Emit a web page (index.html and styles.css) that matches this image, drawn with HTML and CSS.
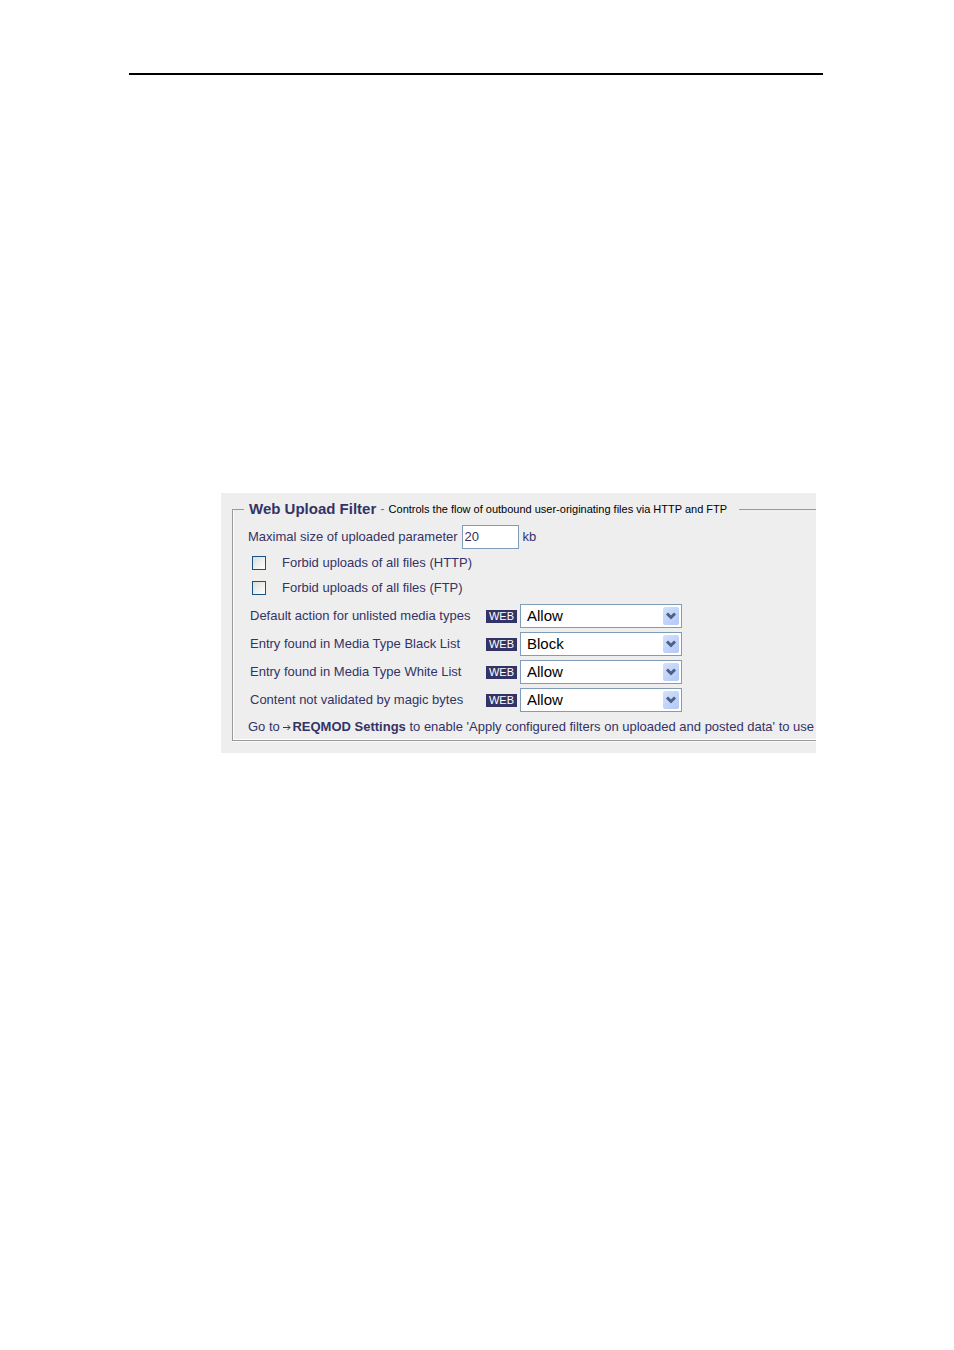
FILE: index.html
```html
<!DOCTYPE html>
<html lang="en">
<head>
<meta charset="utf-8">
<title>Web Upload Filter</title>
<link rel="stylesheet" href="styles.css">
</head>
<body>
<main class="page">
  <hr class="rule">
  <form class="panel">
    <fieldset class="group">
      <legend class="legend"><span class="title">Web Upload Filter</span><span class="dash">-</span><span class="hint">Controls the flow of outbound user-originating files via HTTP and FTP</span></legend>
      <div class="size-row">
        <label for="max-size">Maximal size of uploaded parameter</label>
        <input class="size" id="max-size" type="text" value="20">
        <span>kb</span>
      </div>
      <div class="check-row"><input class="check" type="checkbox" id="http"><label for="http">Forbid uploads of all files (HTTP)</label></div>
      <div class="check-row"><input class="check" type="checkbox" id="ftp"><label for="ftp">Forbid uploads of all files (FTP)</label></div>
      <div class="actions">
        <div class="action">
          <label for="unlisted">Default action for unlisted media types</label><span class="badge">WEB</span>
          <span class="picker"><select id="unlisted"><option selected>Allow</option><option>Block</option></select><svg class="arrow" viewBox="0 0 16 18" aria-hidden="true"><path d="M4 6.5l4 4 4-4"/></svg></span>
        </div>
        <div class="action">
          <label for="black">Entry found in Media Type Black List</label><span class="badge">WEB</span>
          <span class="picker"><select id="black"><option>Allow</option><option selected>Block</option></select><svg class="arrow" viewBox="0 0 16 18" aria-hidden="true"><path d="M4 6.5l4 4 4-4"/></svg></span>
        </div>
        <div class="action">
          <label for="white">Entry found in Media Type White List</label><span class="badge">WEB</span>
          <span class="picker"><select id="white"><option selected>Allow</option><option>Block</option></select><svg class="arrow" viewBox="0 0 16 18" aria-hidden="true"><path d="M4 6.5l4 4 4-4"/></svg></span>
        </div>
        <div class="action">
          <label for="magic">Content not validated by magic bytes</label><span class="badge">WEB</span>
          <span class="picker"><select id="magic"><option selected>Allow</option><option>Block</option></select><svg class="arrow" viewBox="0 0 16 18" aria-hidden="true"><path d="M4 6.5l4 4 4-4"/></svg></span>
        </div>
      </div>
      <p class="note">Go to <a class="link" href="#reqmod"><svg class="goto" viewBox="0 0 8 7" aria-hidden="true"><path d="M0 3.5h7M4.5 1l2.5 2.5L4.5 6"/></svg>REQMOD Settings</a> to enable 'Apply configured filters on uploaded and posted data' to use</p>
    </fieldset>
  </form>
</main>
</body>
</html>
```

FILE: styles.css
```css
* { box-sizing: border-box; }

body {
  margin: 0;
  background: #fff;
  color: #333366;
  font: 13px/16px "Liberation Sans", Arial, sans-serif;
}

.page { padding: 73px 131px 0 129px; }

.rule {
  height: 2px;
  margin: 0;
  border: 0;
  background: #000;
}

.panel {
  margin: 418px 7px 0 92px;
  padding: 8px 0 12px 11px;
  background: #eee;
  overflow: hidden;
}

.group {
  min-width: 0;
  margin: 0;
  padding: 8px 0 5px 15px;
  border: 1px solid #999;
  border-right: 0;
  box-shadow: inset 1px -1px #fff, 0 1px #fafafa;
  white-space: nowrap;
}

.legend {
  display: flex;
  align-items: center;
  margin-left: -4px;
  padding: 0 12px 0 5px;
  color: #000;
}

.title {
  color: #333366;
  font-size: 15px;
  font-weight: bold;
}

.dash {
  padding: 0 4px;
  color: #777;
}

.hint { font-size: 11px; }

.size-row {
  display: flex;
  align-items: center;
  gap: 4px;
}

.size {
  width: 57px;
  height: 24px;
  padding: 0 2px 2px;
  border: 1px solid #7f9db9;
  background: #fff;
  color: inherit;
  font: inherit;
}

.check-row {
  display: flex;
  align-items: center;
  gap: 16px;
  height: 25px;
  padding-left: 4px;
}

.size-row + .check-row { margin-top: 1px; }

.check {
  appearance: none;
  width: 14px;
  height: 14px;
  margin: 0;
  border: 1px solid #1c5180;
  background: linear-gradient(135deg, #dcdcd7, #fff);
}

.check:checked { background: #1c5180; }

.actions {
  display: grid;
  gap: 4px;
  padding: 4px 0 0 2px;
}

.action {
  display: grid;
  grid-template-columns: 236px 31px 165px;
  align-items: center;
}

.badge {
  background: #333366;
  color: #fff;
  font-size: 11px;
  line-height: 13px;
  text-align: center;
}

.picker {
  display: grid;
  align-items: center;
  margin-left: 3px;
}

.picker select {
  grid-area: 1 / 1;
  appearance: none;
  width: 100%;
  height: 24px;
  padding: 0 24px 0 6px;
  border: 1px solid #7f9db9;
  border-radius: 0;
  background: #fff;
  color: #000;
  font: 15px/20px "Liberation Sans", Arial, sans-serif;
}

.arrow {
  grid-area: 1 / 1;
  justify-self: end;
  width: 16px;
  height: 18px;
  margin-right: 3px;
  border-radius: 2px;
  background: linear-gradient(135deg, #d5e1fd, #b1c8f7);
  fill: none;
  stroke: #4d6185;
  stroke-width: 3;
  pointer-events: none;
}

.note { margin: 7px 0 0; }

.link {
  color: inherit;
  font-weight: bold;
  text-decoration: none;
}

.goto {
  width: 8px;
  height: 7px;
  margin-right: 1px;
  fill: none;
  stroke: #333366;
}
```
